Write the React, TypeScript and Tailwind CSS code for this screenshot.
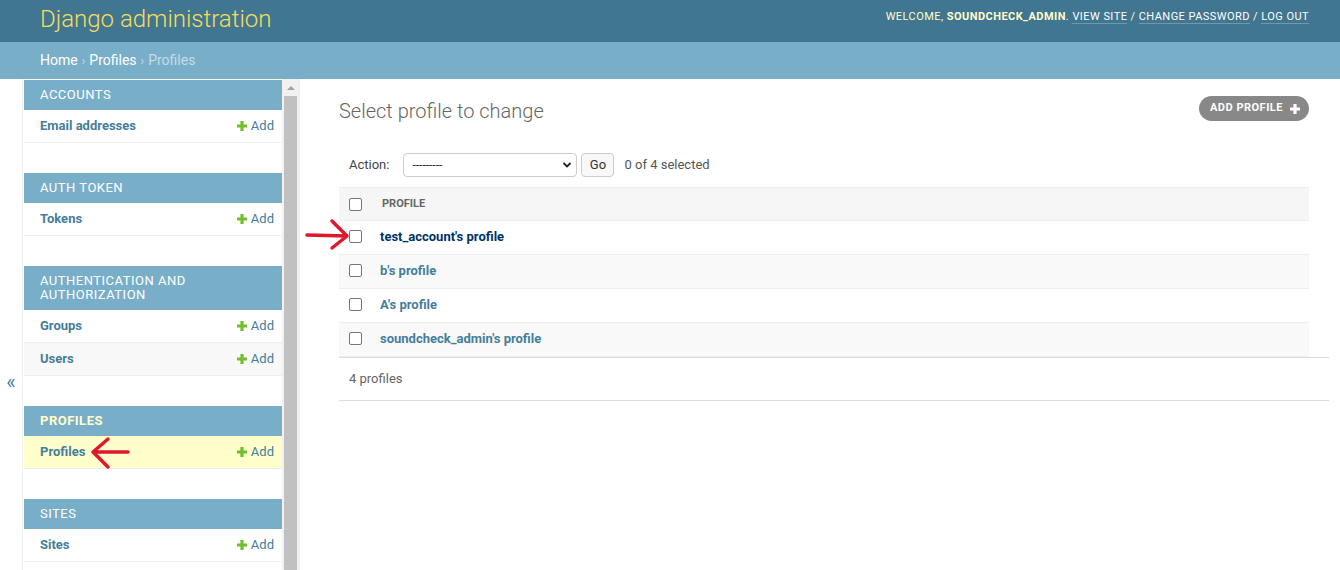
import React from "react";

interface SideRow {
  name: string;
  current?: boolean;
}

interface SideModule {
  caption: string;
  current?: boolean;
  rows: SideRow[];
}

const modules: SideModule[] = [
  { caption: "Accounts", rows: [{ name: "Email addresses" }] },
  { caption: "Auth Token", rows: [{ name: "Tokens" }] },
  {
    caption: "Authentication and Authorization",
    rows: [{ name: "Groups" }, { name: "Users" }],
  },
  { caption: "Profiles", current: true, rows: [{ name: "Profiles", current: true }] },
  { caption: "Sites", rows: [{ name: "Sites" }] },
];

const profiles = [
  "test_account's profile",
  "b's profile",
  "A's profile",
  "soundcheck_admin's profile",
];

function AddIcon({ color = "#70bf2b" }: { color?: string }) {
  return (
    <svg width="10" height="10" viewBox="0 0 10 10" className="shrink-0">
      <path d="M3.4 0h3.2v3.4H10v3.2H6.6V10H3.4V6.6H0V3.4h3.4z" fill={color} />
    </svg>
  );
}

function Checkbox() {
  return (
    <span className="block w-[13px] h-[13px] border border-[#767676] rounded-[2px] bg-white" />
  );
}

export default function App() {
  return (
    <div className="relative h-screen overflow-hidden bg-white font-['Roboto','Lucida_Grande',sans-serif] text-[#333]">
      {/* header */}
      <div className="h-[42px] bg-[#417690] flex items-center justify-between pl-[40px] pr-[31px]">
        <div className="text-[24px] font-light text-[#f5dd5d] leading-[28px] -mt-[5px]">
          Django administration
        </div>
        <div className="text-[11px] tracking-[0.45px] uppercase text-[#ffc] -mt-[7px]">
          Welcome, <strong className="font-bold">soundcheck_admin</strong>.{" "}
          <span className="text-white border-b border-white/25">View site</span> /{" "}
          <span className="text-white border-b border-white/25">Change password</span> /{" "}
          <span className="text-white border-b border-white/25">Log out</span>
        </div>
      </div>

      {/* breadcrumbs */}
      <div className="h-[37px] bg-[#79aec8] flex items-center px-[40px] text-[14px] text-[#c4dce8]">
        <span className="text-white">Home</span>
        <span className="mx-[4px] text-[12px]">›</span>
        <span className="text-white">Profiles</span>
        <span className="mx-[4px] text-[12px]">›</span>
        <span>Profiles</span>
      </div>

      <div className="flex h-[491px]">
        {/* toggle */}
        <div className="w-[23px] shrink-0 border-r border-[#eee] flex justify-center pt-[293px] text-[20px] text-[#447e9b] leading-none">
          «
        </div>

        {/* nav sidebar */}
        <div className="flex ml-[1px] w-[276px] shrink-0 border-r border-[#eee]">
          <div className="w-[258px] shrink-0 pt-[1px]">
            {modules.map((m) => (
              <div key={m.caption} className="mb-[30px]">
                <div
                  className={`bg-[#79aec8] pl-[16px] pr-[8px] py-[8px] text-[13px] leading-[14px] uppercase tracking-[0.5px] ${
                    m.current ? "text-[#ffc] font-bold" : "text-white"
                  }`}
                >
                  {m.caption}
                </div>
                {m.rows.map((r, i) => (
                  <div
                    key={r.name}
                    className={`flex items-center justify-between h-[33px] pl-[16px] pr-[8px] border-b border-[#eee] text-[13px] ${
                      r.current ? "bg-[#ffc]" : i % 2 === 1 ? "bg-[#f8f8f8]" : "bg-white"
                    }`}
                  >
                    <span className="font-bold text-[#447e9b]">{r.name}</span>
                    <span className="flex items-center gap-[4px] text-[#447e9b]">
                      <AddIcon />
                      Add
                    </span>
                  </div>
                ))}
              </div>
            ))}
          </div>
          {/* scrollbar */}
          <div className="w-[17px] shrink-0 bg-[#f1f1f1] flex flex-col items-center">
            <div className="h-[17px] flex items-center justify-center">
              <span className="w-0 h-0 border-l-[4px] border-r-[4px] border-b-[4px] border-l-transparent border-r-transparent border-b-[#a3a3a3]" />
            </div>
            <div className="w-[13px] flex-1 bg-[#c1c1c1]" />
          </div>
        </div>

        {/* content */}
        <div className="flex-1 pl-[39px] pr-[11px] pt-[17px]">
          <div className="flex items-start justify-between pr-[20px]">
            <h1 className="mt-[3px] text-[20px] leading-[24px] font-light text-[#666]">
              Select profile to change
            </h1>
            <div className="h-[25px] flex items-center gap-[7px] rounded-full bg-[#888] pl-[11px] pr-[9px] text-[11px] font-bold uppercase tracking-[0.5px] text-white">
              Add profile
              <AddIcon color="#fff" />
            </div>
          </div>

          <div className="mt-[20px]">
            {/* actions */}
            <div className="flex items-center h-[44px] px-[10px] text-[13px]">
              <span className="text-[#444]">Action:</span>
              <div className="ml-[14px] w-[174px] h-[24px] border border-[#ccc] rounded-[4px] flex items-center justify-between pl-[8px] pr-[4px] text-[#333]">
                <span className="text-[12px]">---------</span>
                <svg width="10" height="8" viewBox="0 0 10 8">
                  <path d="M1.5 2 L5 5.5 L8.5 2" stroke="#222" strokeWidth="1.8" fill="none" />
                </svg>
              </div>
              <div className="ml-[4px] w-[33px] h-[24px] border border-[#ccc] rounded-[4px] bg-[#f8f8f8] flex items-center justify-center text-[#333]">
                Go
              </div>
              <span className="ml-[10px] text-[#555]">0 of 4 selected</span>
            </div>

            {/* results */}
            <div className="mr-[20px] text-[13px]">
              <div className="flex items-center h-[34px] bg-[#f6f6f6] border-t border-b border-[#eee]">
                <div className="pl-[10px] w-[43px]">
                  <Checkbox />
                </div>
                <span className="text-[11px] font-bold uppercase text-[#666]">Profile</span>
              </div>
              {profiles.map((p, i) => (
                <div
                  key={p}
                  className={`flex items-center h-[34px] border-b border-[#eee] ${
                    i % 2 === 1 ? "bg-[#f9f9f9]" : "bg-white"
                  }`}
                >
                  <div className="pl-[10px] w-[41px] -mt-[2px]">
                    <Checkbox />
                  </div>
                  <span className={`font-bold -mt-[2px] ${i === 0 ? "text-[#036]" : "text-[#447e9b]"}`}>{p}</span>
                </div>
              ))}
            </div>
            <div className="h-[44px] flex items-center px-[10px] border-t border-b border-[#ddd] text-[13px] text-[#666]">
              <span className="-mt-[1px]">4 profiles</span>
            </div>
          </div>
        </div>
      </div>

      {/* red annotation arrows */}
      <svg className="absolute left-[300px] top-[215px]" width="54" height="40" viewBox="0 0 54 40">
        <path
          d="M7 20 L47 21 M32 6 L47 21 L32 33"
          stroke="#e0182d"
          strokeWidth="3.5"
          strokeLinecap="round"
          strokeLinejoin="round"
          fill="none"
        />
      </svg>
      <svg className="absolute left-[85px] top-[432px]" width="50" height="42" viewBox="0 0 50 42">
        <path
          d="M8 20 L43 20 M23 7 L8 20 L23 35"
          stroke="#e0182d"
          strokeWidth="3.5"
          strokeLinecap="round"
          strokeLinejoin="round"
          fill="none"
        />
      </svg>
    </div>
  );
}
